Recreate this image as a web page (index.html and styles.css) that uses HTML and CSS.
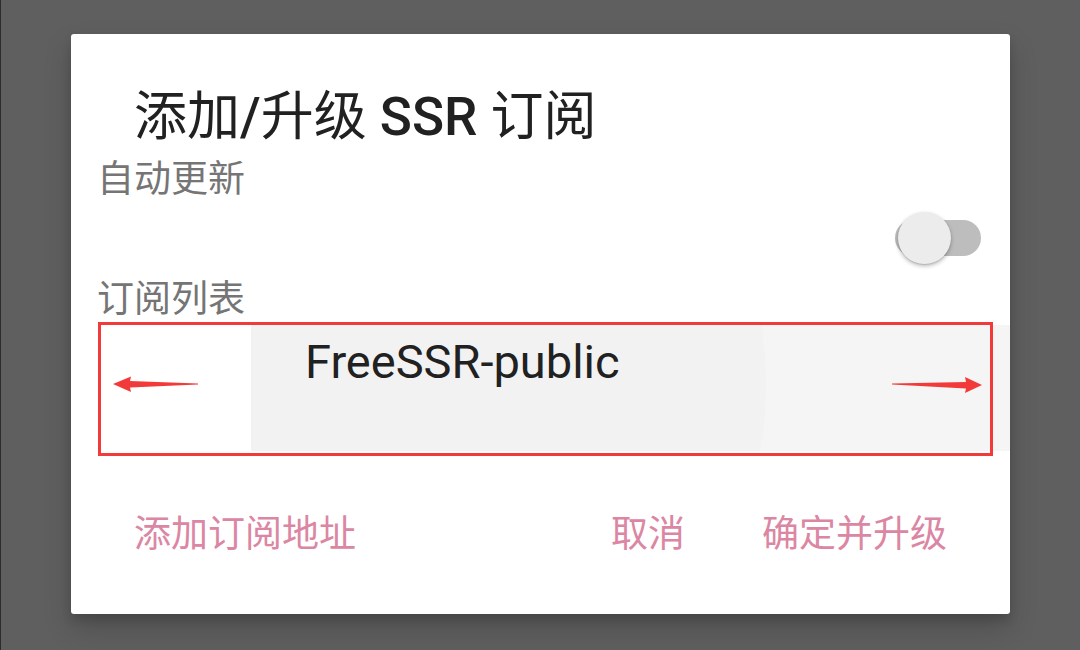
FILE: index.html
```html
<!DOCTYPE html>
<html lang="zh-CN">
<head>
<meta charset="utf-8">
<title>添加/升级 SSR 订阅</title>
<link rel="stylesheet" href="styles.css">
</head>
<body>
<div class="screen">
  <div class="dialog">
    <h1 class="title"><span class="cjk">添加</span>/<span class="cjk">升级</span> SSR <span class="cjk">订阅</span></h1>
    <div class="label">自动更新</div>
    <div class="switch-row">
      <div class="switch">
        <div class="track"></div>
        <div class="thumb"></div>
      </div>
    </div>
    <div class="label label-list">订阅列表</div>
    <div class="list">
      <div class="list-blank"></div>
      <div class="list-item">FreeSSR-public</div>
      <div class="annot-box"></div>
      <svg class="annot-arrows" width="910" height="126" viewBox="0 0 910 126">
        <path d="M13 59 L31 51.5 L30 56 L98 58.4 L98 59.6 L30 62.5 L31 67 Z" fill="#f33a3a"/>
        <path d="M882 60 L865 52 L866 57 L792 58.6 L792 59.4 L866 63.5 L865 68 Z" fill="#f33a3a"/>
      </svg>
    </div>
    <div class="actions">
      <span class="btn">添加订阅地址</span>
      <span class="btn btn-cancel">取消</span>
      <span class="btn btn-ok">确定并升级</span>
    </div>
  </div>
</div>
</body>
</html>
```

FILE: styles.css
```css
html, body {
  margin: 0;
  padding: 0;
}
body {
  width: 1080px;
  height: 650px;
  overflow: hidden;
  background: #5f5f5f;
  font-family: Roboto, "Noto Sans CJK SC", sans-serif;
}
.screen {
  width: 1080px;
  height: 650px;
  box-shadow: inset 1px 0 0 #2c2c2c;
  padding-top: 34px;
  padding-left: 71px;
  box-sizing: border-box;
}
.dialog {
  width: 939px;
  height: 580px;
  background: #ffffff;
  border-radius: 3px;
  box-shadow: 0 14px 28px rgba(0,0,0,0.18), 0 6px 10px rgba(0,0,0,0.12);
  padding: 53px 0 0 29px;
  box-sizing: border-box;
  display: flex;
  flex-direction: column;
}
.title {
  margin: 0;
  padding-left: 34px;
  font-size: 53px;
  line-height: 60px;
  height: 60px;
  font-weight: 500;
  color: #212121;
  white-space: nowrap;
}
.title .cjk {
  font-weight: 400;
}
.label {
  margin-top: 13px;
  margin-left: -3px;
  font-size: 37px;
  line-height: 40px;
  height: 40px;
  color: #757575;
}
.switch-row {
  margin-top: 10px;
  height: 56px;
  display: flex;
  justify-content: flex-end;
  align-items: center;
  padding-right: 29px;
}
.switch {
  position: relative;
  width: 86px;
  height: 56px;
}
.track {
  position: absolute;
  left: 0;
  top: 10px;
  width: 86px;
  height: 36px;
  border-radius: 18px;
  background: #bdbdbd;
}
.thumb {
  position: absolute;
  left: 3px;
  top: 2px;
  width: 53px;
  height: 52px;
  border-radius: 50%;
  background: #ececec;
  box-shadow: 0 2px 4px rgba(0,0,0,0.28), 0 1px 1px rgba(0,0,0,0.1);
}
.label-list {
  margin-top: 14px;
}
.list {
  position: relative;
  margin-top: 5px;
  height: 126px;
  display: flex;
}
.list-blank {
  width: 151px;
  flex: none;
}
.list-item {
  flex: 1;
  padding: 10px 0 0 54px;
  font-size: 47px;
  line-height: 54px;
  color: #212121;
  background: radial-gradient(circle 366px at 149px 60px, #f2f2f2 365.5px, #f5f5f5 366.5px);
}
.annot-box {
  position: absolute;
  left: -2px;
  top: -3px;
  width: 895px;
  height: 134px;
  border: 3px solid #f33a3a;
  box-sizing: border-box;
}
.annot-arrows {
  position: absolute;
  left: 0;
  top: 0;
}
.actions {
  margin-top: 64px;
  display: flex;
  padding-left: 34px;
  padding-right: 63px;
  font-size: 37px;
  line-height: 40px;
  color: #db87a4;
}
.btn {
  white-space: nowrap;
}
.btn-cancel {
  margin-left: auto;
}
.btn-ok {
  margin-left: 77px;
}
```
